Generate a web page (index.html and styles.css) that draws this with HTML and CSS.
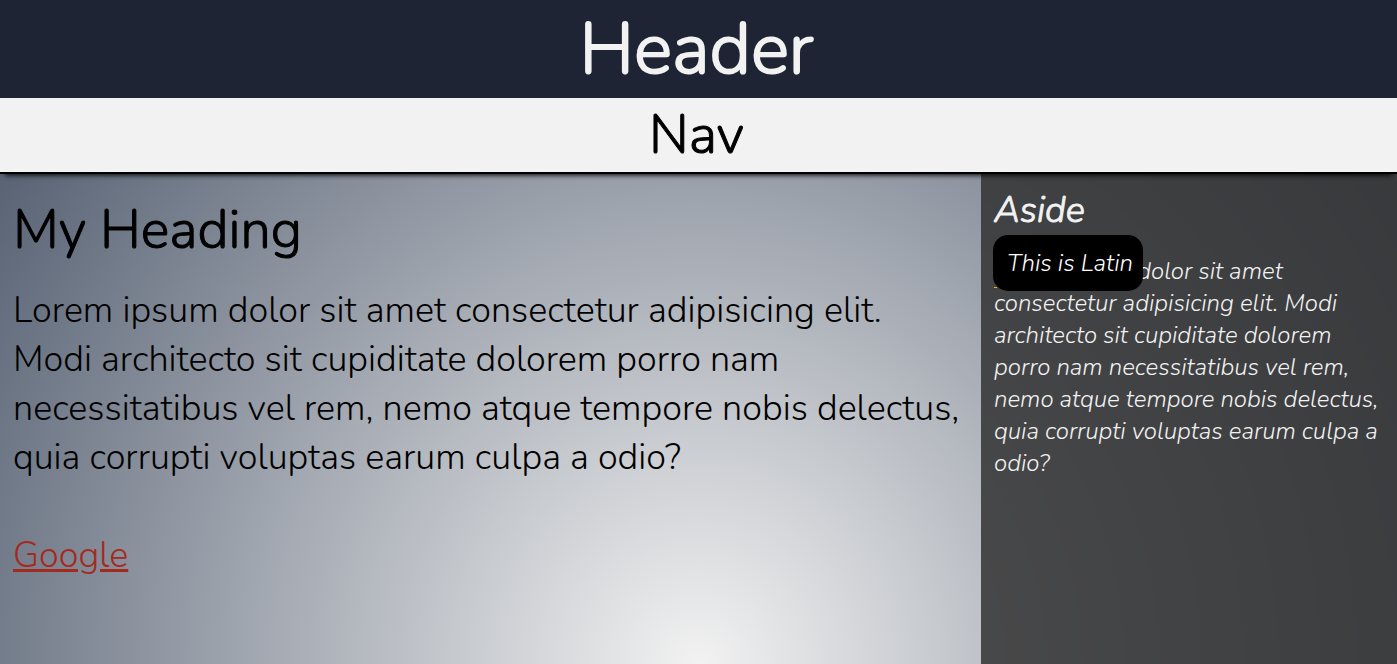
FILE: index.html
```html
<!DOCTYPE html>
<html lang="en">
<head>
<meta charset="utf-8">
<meta name="viewport" content="width=device-width, initial-scale=1">
<title>My Page</title>
<link rel="stylesheet" href="styles.css">
</head>
<body>
<header class="header">Header</header>
<nav class="nav">Nav</nav>
<div class="content">
  <main class="main">
    <h1 class="main-title">My Heading</h1>
    <p class="main-text">Lorem ipsum dolor sit amet consectetur adipisicing elit. Modi architecto sit cupiditate dolorem porro nam necessitatibus vel rem, nemo atque tempore nobis delectus, quia corrupti voluptas earum culpa a odio?</p>
    <a class="link" href="https://www.google.com">Google</a>
  </main>
  <aside class="aside">
    <h2 class="aside-title">Aside</h2>
    <p class="aside-text"><span class="term">Lorem ipsum<span class="tooltip" role="tooltip">This is Latin</span></span> dolor sit amet consectetur adipisicing elit. Modi architecto sit cupiditate dolorem porro nam necessitatibus vel rem, nemo atque tempore nobis delectus, quia corrupti voluptas earum culpa a odio?</p>
  </aside>
</div>
</body>
</html>
```
FILE: styles.css
```css
* {
  box-sizing: border-box;
  margin: 0;
  padding: 0;
}

body {
  display: flex;
  flex-direction: column;
  min-height: 100vh;
  font-family: Nunito, Lato, sans-serif;
  font-size: 36px;
  font-weight: 300;
  line-height: 49px;
  color: #000;
  background: radial-gradient(circle at bottom, #f2f2f2, #445064);
}

.header,
.nav,
.main-title,
.aside-title {
  font-weight: 300;
  -webkit-text-stroke: 1px currentColor;
}

.header {
  padding-right: 4px;
  background: #1e2433;
  color: #f2f2f2;
  font-size: 72px;
  line-height: 98px;
  text-align: center;
  -webkit-text-stroke-width: 2px;
}

.nav {
  position: relative;
  padding-right: 4px;
  background: #f2f2f2;
  border-bottom: 2px solid #000;
  box-shadow: 0 6px 5px -5px #000;
  font-size: 54px;
  line-height: 74px;
  text-align: center;
}

.content {
  flex: 1;
  display: grid;
  grid-template-columns: 1fr 416px;
}

.main {
  padding: 19px 13px;
}

.main-title {
  margin-bottom: 19px;
  font-size: 54px;
  line-height: 74px;
}

.main-text {
  margin-bottom: 49px;
}

.link {
  color: #a52a1e;
}

.aside {
  padding: 12px 13px;
  background: rgba(51, 51, 51, 0.85);
  color: #f2f2f2;
  font-size: 24px;
  font-style: italic;
  line-height: 32px;
}

.aside-title {
  margin-bottom: 20px;
  font-size: 36px;
  line-height: 49px;
}

.term {
  position: relative;
  border-bottom: 1px dashed orange;
}

.tooltip {
  position: absolute;
  bottom: -4px;
  left: -1px;
  padding: 12px 10px 12px 14px;
  border-radius: 15px;
  background: #000;
  color: #fff;
  white-space: nowrap;
}
```
